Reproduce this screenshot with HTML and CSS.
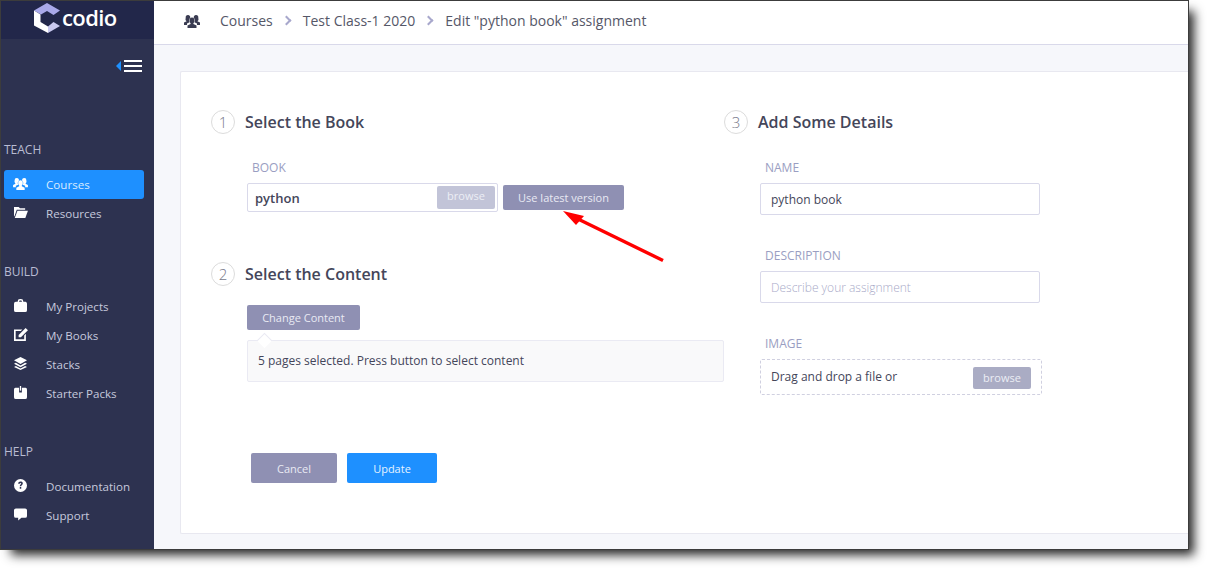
FILE: index.html
```html
<!DOCTYPE html>
<html lang="en">
<head>
  <meta charset="UTF-8">
  <title>Edit assignment</title>
  <link rel="stylesheet" href="styles.css">
</head>
<body>
  <div class="window">
    <aside class="sidebar">
      <div class="logo">
        <svg class="logo-mark" viewBox="0 0 26 30" width="26" height="30">
          <path d="M13 0 26 7.500 19.500 12 13 8 7 11.500 0 7.500Z" fill="#a9a9ea"/>
          <path d="M0 7.500 6.500 11.500V19L14 23.500V30L0 22.500Z" fill="#fff"/>
          <path d="M14 23.500 19.500 19 26 23 14 30Z" fill="#c9c9f0"/>
        </svg>
        <span class="logo-text">codio</span>
      </div>
      <div class="toggle">
        <span class="toggle-arrow"></span>
        <span class="toggle-bars"><i></i><i></i><i></i></span>
      </div>

      <h4 class="nav-title nav-teach">TEACH</h4>
      <a class="nav-item active">
        <svg class="nav-icon" viewBox="0 0 16 14"><path d="M4 1a2.300 2.300 0 0 1 2.200 3A3.500 3.500 0 0 0 5 6.500c0 .8.300 1.400.6 1.800L3 9.500V11H0V8.500l2.600-1.300A3.400 3.400 0 0 1 1.700 3.500 2.300 2.300 0 0 1 4 1Zm8 0a2.300 2.300 0 0 1 2.300 2.500 3.400 3.400 0 0 1-.9 3.700L16 8.500V11h-3V9.500l-2.600-1.200c.3-.4.6-1 .6-1.800a3.500 3.500 0 0 0-1.200-2.500A2.300 2.300 0 0 1 12 1ZM8 3.500c1.500 0 2.500 1.200 2.500 3 0 1.200-.5 2.200-1.100 2.700v.8l3.100 1.500V14h-9v-2.500L6.600 10v-.8C6 8.700 5.500 7.700 5.500 6.500c0-1.800 1-3 2.500-3Z" fill="#fff"/></svg>
        <span>Courses</span>
      </a>
      <a class="nav-item">
        <svg class="nav-icon" viewBox="0 0 16 14"><path d="M1 1h5l1.500 1.500H13V4H4L1.500 11H1Z" fill="#fff"/><path d="M4.700 5H16l-2.800 8H1.800Z" fill="#fff"/></svg>
        <span>Resources</span>
      </a>

      <h4 class="nav-title nav-build">BUILD</h4>
      <a class="nav-item">
        <svg class="nav-icon" viewBox="0 0 16 14"><path d="M5 3V2.500A2.500 2.500 0 0 1 7.500 0h1A2.500 2.500 0 0 1 11 2.500V3h2.500A2 2 0 0 1 15 5v7a2 2 0 0 1-2 2H3a2 2 0 0 1-2-2V5a2 2 0 0 1 2-2Zm1.500 0h3v-.5a1 1 0 0 0-1-1h-1a1 1 0 0 0-1 1Z" fill="#fff"/></svg>
        <span>My Projects</span>
      </a>
      <a class="nav-item">
        <svg class="nav-icon" viewBox="0 0 16 14"><path d="M1 1.500H10L8.300 3.200H2.800V12.200H12V8L13.800 6.300V14H1Z" fill="#fff"/><path d="M13.500 0 16 2.500 8.500 10H6V7.500Z" fill="#fff"/></svg>
        <span>My Books</span>
      </a>
      <a class="nav-item">
        <svg class="nav-icon" viewBox="0 0 16 14"><path d="M8 0 15 3.500 8 7.500 1 3.500Z" fill="#fff"/><path d="M3 6.300 8 9.100 13 6.300 15 7.300 8 11 1 7.300Z" fill="#fff"/><path d="M3 9.800 8 12.400 13 9.800 15 10.800 8 14 1 10.800Z" fill="#fff"/></svg>
        <span>Stacks</span>
      </a>
      <a class="nav-item">
        <svg class="nav-icon" viewBox="0 0 16 14"><path d="M3.500 2H6.500V7H9.500V2h3A2 2 0 0 1 15 4v8a2 2 0 0 1-2 2H3a2 2 0 0 1-2-2V4a2 2 0 0 1 2.500-2Z" fill="#fff"/><path d="M7.300 0h1.400v5H7.300Z" fill="#fff"/></svg>
        <span>Starter Packs</span>
      </a>

      <h4 class="nav-title nav-help">HELP</h4>
      <a class="nav-item">
        <svg class="nav-icon" viewBox="0 0 16 14"><path fill-rule="evenodd" d="M8 0a7 7 0 1 1 0 14A7 7 0 0 1 8 0ZM5.500 5.200h1.700c.1-.6.300-1 .8-1s.8.300.8.700c0 .9-1.600 1.200-1.600 3h1.600c0-1.200 1.700-1.500 1.700-3.200C10.500 3.300 9.400 2.600 8 2.600c-1.500 0-2.400.9-2.500 2.600ZM7.200 8.700v1.800h1.600V8.700Z" fill="#fff"/></svg>
        <span>Documentation</span>
      </a>
      <a class="nav-item">
        <svg class="nav-icon" viewBox="0 0 16 14"><path d="M3 .5h10A2 2 0 0 1 15 2.500v6a2 2 0 0 1-2 2H9L5.500 13.500V10.500H3a2 2 0 0 1-2-2v-6a2 2 0 0 1 2-2Z" fill="#fff"/></svg>
        <span>Support</span>
      </a>
    </aside>

    <div class="main">
      <header class="topbar">
        <svg class="crumb-icon" viewBox="0 0 16 14"><path d="M4 1a2.300 2.300 0 0 1 2.200 3A3.500 3.500 0 0 0 5 6.500c0 .8.300 1.400.6 1.800L3 9.500V11H0V8.500l2.600-1.300A3.400 3.400 0 0 1 1.700 3.500 2.300 2.300 0 0 1 4 1Zm8 0a2.300 2.300 0 0 1 2.300 2.500 3.400 3.400 0 0 1-.9 3.700L16 8.500V11h-3V9.500l-2.600-1.200c.3-.4.6-1 .6-1.800a3.500 3.500 0 0 0-1.200-2.500A2.300 2.300 0 0 1 12 1ZM8 3.500c1.500 0 2.500 1.200 2.500 3 0 1.200-.5 2.200-1.100 2.700v.8l3.100 1.500V14h-9v-2.500L6.600 10v-.8C6 8.700 5.500 7.700 5.500 6.500c0-1.800 1-3 2.500-3Z" fill="#3a3c52"/></svg>
        <span class="crumb">Courses</span>
        <span class="chevron"></span>
        <span class="crumb">Test Class-1 2020</span>
        <span class="chevron"></span>
        <span class="crumb">Edit "python book" assignment</span>
      </header>

      <div class="content">
        <div class="card">
          <div class="col-left">
            <div class="step">
              <span class="step-num">1</span>
              <h3>Select the Book</h3>
            </div>
            <div class="indent">
              <label class="field-label">BOOK</label>
              <div class="book-row">
                <div class="book-input">
                  <span class="book-name">python</span>
                  <span class="btn-browse-off">browse</span>
                </div>
                <button class="btn btn-latest">Use latest version</button>
              </div>
            </div>

            <div class="step step-two">
              <span class="step-num">2</span>
              <h3>Select the Content</h3>
            </div>
            <div class="indent">
              <button class="btn btn-change">Change Content</button>
              <div class="selected-box">5 pages selected. Press button to select content</div>
            </div>

            <div class="actions">
              <button class="btn btn-cancel">Cancel</button>
              <button class="btn btn-update">Update</button>
            </div>
          </div>

          <div class="col-right">
            <div class="step">
              <span class="step-num">3</span>
              <h3>Add Some Details</h3>
            </div>
            <div class="indent">
              <label class="field-label">NAME</label>
              <div class="text-input">python book</div>
              <label class="field-label field-next">DESCRIPTION</label>
              <div class="text-input placeholder">Describe your assignment</div>
              <label class="field-label field-next">IMAGE</label>
              <div class="dropzone">
                <span>Drag and drop a file or</span>
                <span class="btn-browse">browse</span>
              </div>
            </div>
          </div>
        </div>
      </div>
    </div>

    <svg class="annotation" width="120" height="70" viewBox="0 0 120 70">
      <path d="M117 63.500 32 22" stroke="#f00" stroke-width="3.400" fill="none"/>
      <path d="M17 14 38 19 30 28Z" fill="#f00"/>
    </svg>
  </div>
</body>
</html>
```

FILE: styles.css
```css
* {
  box-sizing: border-box;
}
html {
  height: 100%;
  background: #fff;
}
body {
  height: 100%;
  margin: 0;
  padding: 0;
  font-family: 'Open Sans', sans-serif;
  font-size: 12px;
  color: #44465a;
}
.window {
  position: relative;
  display: flex;
  width: 1189px;
  height: 550px;
  border: 1px solid #3c3c3c;
  box-shadow: 8px 8px 10px -3px rgba(0, 0, 0, 0.85);
}

/* sidebar */
.sidebar {
  width: 153px;
  flex: none;
  background: #2d3250;
  color: #c6c9dd;
}
.logo {
  display: flex;
  align-items: center;
  height: 38px;
  padding-left: 33px;
  background: #22274a;
}
.logo-mark {
  flex: none;
  margin-top: -4px;
}
.logo-text {
  margin-left: 2px;
  margin-top: -7px;
  font-size: 22px;
  font-weight: 600;
  letter-spacing: -0.6px;
  color: #fff;
}
.toggle {
  display: flex;
  align-items: center;
  justify-content: flex-end;
  gap: 3px;
  height: 12px;
  margin-top: 21px;
  padding-right: 12px;
}
.toggle-arrow {
  width: 0;
  height: 0;
  border-top: 5px solid transparent;
  border-bottom: 5px solid transparent;
  border-right: 5px solid #1e90ff;
}
.toggle-bars {
  display: flex;
  flex-direction: column;
  gap: 3px;
  width: 18px;
}
.toggle-bars i {
  display: block;
  height: 2px;
  background: #fff;
}
.nav-title {
  margin: 0 0 12px 3px;
  font-size: 12px;
  font-weight: 400;
  line-height: 16px;
  color: #b9bcd2;
}
.nav-teach {
  margin-top: 70px;
}
.nav-build, .nav-help {
  margin-top: 36px;
}
.nav-item {
  display: flex;
  align-items: center;
  height: 29px;
  margin: 0 10px 0 3px;
  padding: 0 0 1px 9px;
  border-radius: 3px;
  font-size: 11.600px;
  color: #c6c9dd;
}
.nav-item.active {
  background: #1e90ff;
  color: #d8ebff;
}
.nav-icon {
  width: 15px;
  height: 13px;
  margin-top: -2px;
  margin-right: 18px;
  flex: none;
}

/* main */
.main {
  flex: 1;
  min-width: 0;
  display: flex;
  flex-direction: column;
  background: #f6f7fb;
}
.topbar {
  display: flex;
  align-items: center;
  flex: none;
  height: 44px;
  padding-left: 30px;
  background: #fff;
  border-bottom: 1px solid #d9d9ea;
  font-size: 14px;
  color: #555768;
}
.crumb-icon {
  width: 16px;
  height: 14px;
  margin-top: -4px;
  margin-right: 20px;
}
.crumb {
  margin-top: -5px;
}
.chevron {
  width: 7px;
  height: 7px;
  margin: -4px 13px 0 10px;
  border-top: 2.500px solid #a8a8cc;
  border-right: 2.500px solid #a8a8cc;
  transform: rotate(45deg);
}
.content {
  flex: 1;
  min-height: 0;
  padding: 26px 0 15px 26px;
}
.card {
  display: flex;
  height: 100%;
  padding: 38px 0 0 30px;
  background: #fff;
  border: 1px solid #e8e8f0;
  border-right: none;
  border-radius: 2px 0 0 2px;
}
.col-left {
  width: 513px;
  flex: none;
}
.col-right {
  flex: 1;
}
.step {
  display: flex;
  align-items: center;
  height: 24px;
}
.step-two {
  margin-top: 50px;
}
.step-num {
  display: flex;
  align-items: center;
  justify-content: center;
  width: 24px;
  height: 24px;
  margin-right: 10px;
  border: 1px solid #dcdcdc;
  border-radius: 50%;
  font-size: 15px;
  font-weight: 300;
  color: #77798a;
}
.step h3 {
  margin: 0;
  font-size: 16px;
  font-weight: 600;
  color: #44465a;
}
.indent {
  margin-left: 36px;
}
.field-label {
  display: block;
  height: 16px;
  margin: 26px 0 7px 5px;
  font-size: 12px;
  line-height: 16px;
  color: #9a9ec2;
}
.field-label.field-next {
  margin-top: 33px;
}
.book-row {
  display: flex;
  align-items: center;
  gap: 5px;
}
.book-input {
  display: flex;
  align-items: center;
  justify-content: space-between;
  width: 251px;
  height: 29px;
  padding: 0 2px 0 7px;
  border: 1px solid #d9d9ea;
  border-radius: 2px;
}
.book-name {
  font-size: 13px;
  font-weight: 600;
}
.btn-browse-off {
  width: 58px;
  height: 23px;
  padding-top: 2px;
  background: #c2c4d8;
  border-radius: 2px;
  font-size: 11px;
  line-height: 15px;
  text-align: center;
  color: #eceef5;
}
.btn {
  border: none;
  border-radius: 2px;
  font-family: 'Open Sans', sans-serif;
  font-size: 11px;
  color: #e9eaf3;
  padding: 0;
}
.btn-latest {
  width: 121px;
  height: 25px;
  background: #8f90b3;
}
.btn-change {
  display: block;
  width: 113px;
  height: 25px;
  margin-top: 19px;
  background: #8f90b3;
}
.selected-box {
  position: relative;
  height: 42px;
  margin-top: 10px;
  padding-left: 10px;
  background: #f9f9fa;
  border: 1px solid #eaeaf3;
  border-radius: 2px;
  line-height: 39px;
}
.selected-box::before {
  content: "";
  position: absolute;
  top: -6px;
  left: 11px;
  width: 10px;
  height: 10px;
  background: #fff;
  border-top: 1px solid #eaeaf3;
  border-left: 1px solid #eaeaf3;
  transform: rotate(45deg);
}
.actions {
  display: flex;
  gap: 10px;
  margin: 71px 0 0 40px;
}
.btn-cancel {
  width: 86px;
  height: 30px;
  background: #8f90b3;
}
.btn-update {
  width: 90px;
  height: 30px;
  background: #1e90ff;
  color: #e6f3ff;
}
.text-input {
  display: flex;
  align-items: center;
  width: 280px;
  height: 32px;
  padding-left: 10px;
  border: 1px solid #d9d9ea;
  border-radius: 2px;
}
.text-input.placeholder {
  font-weight: 300;
  color: #a9aac8;
}
.dropzone {
  display: flex;
  align-items: center;
  justify-content: space-between;
  width: 282px;
  height: 36px;
  padding: 0 10px;
  border: 1px dashed #d0d0e0;
  border-radius: 2px;
}
.dropzone span:first-child {
  margin-top: -2px;
}
.btn-browse {
  width: 58px;
  height: 22px;
  margin-top: 1px;
  background: #aaacc4;
  border-radius: 2px;
  font-size: 11px;
  line-height: 22px;
  text-align: center;
  color: #eceef5;
}

/* red arrow drawn over the page */
.annotation {
  position: absolute;
  left: 545px;
  top: 196px;
}
```
